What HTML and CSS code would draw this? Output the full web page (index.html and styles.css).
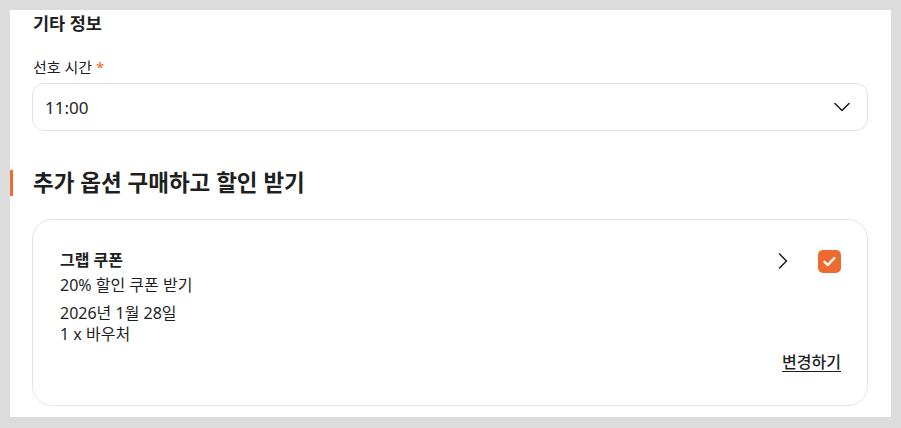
FILE: index.html
```html
<!DOCTYPE html>
<html lang="ko">
<head>
    <meta charset="UTF-8">
    <meta name="viewport" content="width=device-width, initial-scale=1.0">
    <title>기타 정보</title>
    <link rel="stylesheet" href="styles.css">
</head>
<body>
    <div class="panel">
        <h2 class="block-title">기타 정보</h2>
        <label class="field-label">선호 시간 <span class="req">*</span></label>
        <div class="select">
            <span>11:00</span>
            <svg width="16" height="10" viewBox="0 0 16 10" fill="none" stroke="#222" stroke-width="1.6" stroke-linecap="round" stroke-linejoin="round"><path d="M1 1.5l7 7 7-7"/></svg>
        </div>

        <h2 class="section-title">추가 옵션 구매하고 할인 받기</h2>

        <div class="card">
            <div class="card-top">
                <div class="card-info">
                    <div class="card-name">그랩 쿠폰</div>
                    <div class="card-line">20% 할인 쿠폰 받기</div>
                    <div class="card-meta">
                        <div>2026년 1월 28일</div>
                        <div>1 x 바우처</div>
                    </div>
                </div>
                <div class="card-actions">
                    <svg width="10" height="16" viewBox="0 0 10 16" fill="none" stroke="#222" stroke-width="1.6" stroke-linecap="round" stroke-linejoin="round"><path d="M1.5 1l7 7-7 7"/></svg>
                    <span class="check">
                        <svg width="15" height="15" viewBox="0 0 15 15" fill="none" stroke="#fff" stroke-width="2.4" stroke-linecap="round" stroke-linejoin="round"><path d="M2.5 7.8l3.2 3.2 6.8-7"/></svg>
                    </span>
                </div>
            </div>
            <a class="change" href="#">변경하기</a>
        </div>
    </div>
</body>
</html>
```

FILE: styles.css
```css
body {
    margin: 0;
    padding: 10px 10px 0;
    background: #dcdcdc;
    font-family: "Noto Sans", "Noto Sans CJK KR", sans-serif;
    color: #1f1f1f;
}
.panel {
    background: white;
    height: 407px;
    padding: 0 23px 0 22px;
    position: relative;
    overflow: hidden;
}
.block-title {
    margin: 0;
    padding-left: 1px;
    font-size: 17.5px;
    line-height: 26px;
    font-weight: 700;
}
.field-label {
    display: block;
    margin-top: 20px;
    padding-left: 1px;
    font-size: 15px;
    line-height: 22px;
}
.req { color: #ee6a2f; }
.select {
    margin-top: 5px;
    height: 46px;
    border: 1px solid #e2e2e2;
    border-radius: 12px;
    display: flex;
    align-items: center;
    justify-content: space-between;
    padding: 0 17px 0 12px;
    font-size: 17px;
}
.section-title {
    margin: 37px 0 0;
    padding-left: 1px;
    font-size: 22.5px;
    line-height: 30px;
    font-weight: 700;
}
.section-title::before {
    content: "";
    position: absolute;
    left: 0;
    width: 3px;
    height: 26px;
    margin-top: 2px;
    background: #ee6a2f;
}
.card {
    margin-top: 21px;
    height: 187px;
    border: 1px solid #e4e4e4;
    border-radius: 20px;
    padding: 29px 26px 0 27px;
    box-sizing: border-box;
    font-size: 16px;
}
.card-top {
    display: flex;
    justify-content: space-between;
}
.card-name {
    font-weight: 700;
    line-height: 22px;
    margin-bottom: 3px;
}
.card-line { line-height: 22px; }
.card-meta {
    margin-top: 7px;
    line-height: 21px;
}
.card-actions {
    display: flex;
    align-items: center;
    gap: 30px;
    height: 24px;
}
.check {
    width: 23px;
    height: 23px;
    border-radius: 5px;
    background: #ee6a2f;
    display: flex;
    align-items: center;
    justify-content: center;
}
.change {
    display: block;
    width: max-content;
    margin: 6px 0 0 auto;
    line-height: 22px;
    color: #1f1f1f;
    font-weight: 500;
    text-decoration: underline;
    text-underline-offset: 3px;
}
```
